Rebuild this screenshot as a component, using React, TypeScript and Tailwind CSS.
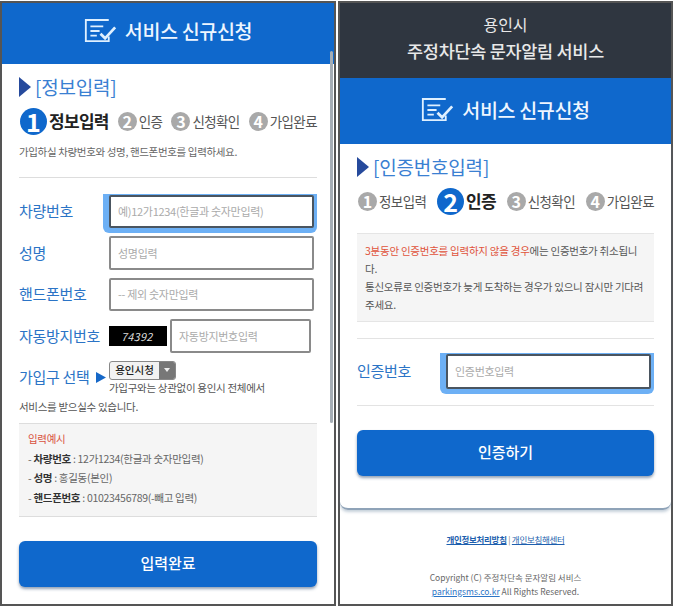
import React from "react";

function TitleIcon() {
  return (
    <svg width="33" height="26" viewBox="0 0 36 26" fill="none" stroke="#dff0ff" strokeWidth="2" className="shrink-0">
      <path d="M27 1H2v23h25v-5" />
      <path d="M7 8h14M7 13h10M7 18h7" />
      <path d="M18 16l5 5L34 9" strokeWidth="3" />
    </svg>
  );
}

function Triangle() {
  return (
    <svg width="12" height="20" viewBox="0 0 12 20" className="shrink-0">
      <path d="M0 0l12 10L0 20z" fill="#264a9c" />
    </svg>
  );
}

function Step({ n, label, active }: { n: number; label: string; active?: boolean }) {
  if (active) {
    return (
      <div className="flex items-center gap-[2px]">
        <span className="flex h-[27px] w-[27px] items-center justify-center rounded-full bg-[#0f68cc] text-[25px] font-bold leading-none text-white">{n}</span>
        <span className="text-[17px] font-bold tracking-[-0.7px] text-[#222]">{label}</span>
      </div>
    );
  }
  return (
    <div className="flex items-center gap-[2px]">
      <span className="flex h-[19px] w-[19px] items-center justify-center rounded-full bg-[#a9a9a9] text-[16px] font-bold leading-none text-white">{n}</span>
      <span className="text-[13.5px] tracking-[-0.6px] text-[#555]">{label}</span>
    </div>
  );
}

function Steps({ current }: { current: number }) {
  const labels = ["정보입력", "인증", "신청확인", "가입완료"];
  return (
    <div className="flex h-[28px] items-center justify-between pl-[1px]">
      {labels.map((label, i) => (
        <Step key={label} n={i + 1} label={label} active={current === i + 1} />
      ))}
    </div>
  );
}

function Field({ placeholder, focus, className }: { placeholder: string; focus?: boolean; className: string }) {
  return (
    <div className={`relative ${className}`}>
      {focus && <div className="absolute -bottom-[5px] -left-[6px] -top-[1px] right-[-3px] rounded-b-[6px] bg-[#6db0f5]" />}
      <div className={`relative flex h-full items-center rounded-[2px] border-2 bg-white pl-[7px] text-[11px] tracking-[-0.3px] text-[#aaa] ${focus ? "border-[#4a5560]" : "border-[#8a8a8a]"}`}>
        {placeholder}
      </div>
    </div>
  );
}

function Label({ children }: { children: React.ReactNode }) {
  return <span className="w-[90px] shrink-0 text-[15px] tracking-[-0.3px] text-[#2b74c6]">{children}</span>;
}

function BlueHeader({ className }: { className: string }) {
  return (
    <div className={`flex shrink-0 items-center justify-center gap-[8px] bg-[#0f68cc] ${className}`}>
      <TitleIcon />
      <span className="text-[19.6px] font-medium tracking-[-0.4px] text-[#eef6ff]">서비스 신규신청</span>
    </div>
  );
}

function SubmitButton({ children }: { children: React.ReactNode }) {
  return (
    <div className="flex h-[46px] items-center justify-center rounded-[6px] bg-[#0f68cc] pb-[2px] text-[15px] font-medium text-white shadow-[0_2px_3px_rgba(40,70,110,0.5)]">
      {children}
    </div>
  );
}

function SectionTitle({ children }: { children: React.ReactNode }) {
  return (
    <div className="flex h-[24px] items-center gap-[4px]">
      <Triangle />
      <span className="text-[19px] tracking-[-0.2px] text-[#3a80d2]">{children}</span>
    </div>
  );
}

function LeftPanel() {
  return (
    <div className="relative flex h-[605px] w-[336px] shrink-0 flex-col border-2 border-[#555] bg-white">
      <BlueHeader className="h-[61px] pb-[5px]" />
      <div className="absolute right-[1px] top-[48px] h-[372px] w-[3px] rounded-full bg-[#a5adb5]" />
      <div className="flex flex-1 flex-col px-[17px] pt-[11px]">
        <SectionTitle>[정보입력]</SectionTitle>
        <div className="mt-[8px]">
          <Steps current={1} />
        </div>
        <p className="mt-[9px] text-[10.5px] tracking-[-0.35px] text-[#666]">가입하실 차량번호와 성명, 핸드폰번호를 입력하세요.</p>
        <div className="mt-[17px] h-[1px] bg-[#ddd]" />

        <div className="mt-[17px] flex items-center">
          <Label>차량번호</Label>
          <Field focus placeholder="예)12가1234(한글과 숫자만입력)" className="h-[33.5px] w-[205px]" />
        </div>
        <div className="mt-[8px] flex items-center">
          <Label>성명</Label>
          <Field placeholder="성명입력" className="h-[33.5px] w-[205px]" />
        </div>
        <div className="mt-[8px] flex items-center">
          <Label>핸드폰번호</Label>
          <Field placeholder="-- 제외 숫자만입력" className="h-[33.5px] w-[205px]" />
        </div>
        <div className="mt-[8px] flex items-center">
          <Label>자동방지번호</Label>
          <div className="flex h-[20px] w-[58px] items-center bg-black pl-[12px] text-[11px] italic tracking-[0.2px] text-[#ddd]">74392</div>
          <Field placeholder="자동방지번호입력" className="ml-[3px] h-[33.5px] w-[141px]" />
        </div>

        <div className="mt-[8px] flex">
          <span className="flex h-[27px] w-[90px] shrink-0 items-end gap-[6px] text-[15px] leading-[22px] tracking-[-0.3px] text-[#2b74c6]">
            <span className="shrink-0">가입구 선택</span>
            <svg width="10" height="11" viewBox="0 0 10 11" className="mb-[5px] shrink-0">
              <path d="M0 0l10 5.5L0 11z" fill="#1668c8" />
            </svg>
          </span>
          <div className="flex flex-col">
            <div className="flex h-[19px] w-[67px] overflow-hidden rounded-[3px] border border-[#888] bg-[#f2f2f2] text-[10.5px] font-medium leading-[16px] text-[#222]">
              <span className="flex-1 text-center">용인시청</span>
              <span className="flex w-[16px] items-center justify-center bg-[#777]">
                <svg width="6" height="4" viewBox="0 0 6 4">
                  <path d="M0 0h6L3 4z" fill="#eee" />
                </svg>
              </span>
            </div>
            <p className="whitespace-nowrap text-[10.5px] tracking-[-0.3px] text-[#555]">가입구와는 상관없이 용인시 전체에서</p>
          </div>
        </div>
        <p className="mt-[3px] text-[10.5px] tracking-[-0.3px] text-[#555]">서비스를 받으실수 있습니다.</p>

        <div className="mt-[9px] h-[94px] border-y border-[#ddd] bg-[#f5f5f5] px-[9px] pt-[5px] text-[10.5px] leading-[19.5px] tracking-[-0.3px] text-[#666]">
          <p className="text-[#d9533f]">입력예시</p>
          <p>- <b className="font-bold text-[#333]">차량번호</b> : 12가1234(한글과 숫자만입력)</p>
          <p>- <b className="font-bold text-[#333]">성명</b> : 홍길동(본인)</p>
          <p>- <b className="font-bold text-[#333]">핸드폰번호</b> : 01023456789(-빼고 입력)</p>
        </div>

        <div className="mt-[24px]">
          <SubmitButton>입력완료</SubmitButton>
        </div>
      </div>
    </div>
  );
}

function RightPanel() {
  return (
    <div className="flex h-[605px] w-[335px] shrink-0 flex-col border-2 border-[#555] bg-white">
      <div className="flex h-[75px] shrink-0 flex-col items-center justify-center bg-[#2f3640] pb-[5px] text-[#e8e8e8]">
        <span className="text-[16px] leading-[25px]">용인시</span>
        <span className="text-[17.5px] font-medium leading-[27px] tracking-[-0.3px]">주정차단속 문자알림 서비스</span>
      </div>
      <BlueHeader className="h-[66px] pb-[2px]" />
      <div className="flex h-[366px] shrink-0 flex-col rounded-b-[8px] border-b-2 border-[#8fa3b8] px-[17px] pt-[11px] shadow-[0_2px_3px_rgba(90,120,150,0.35)]">
        <SectionTitle>[인증번호입력]</SectionTitle>
        <div className="mt-[8px]">
          <Steps current={2} />
        </div>
        <div className="mt-[18px] h-[89px] border-y border-[#e5e5e5] bg-[#f5f5f5] px-[8px] pt-[8px] text-[10.5px] leading-[18px] tracking-[-0.25px] text-[#555]">
          <p className="whitespace-nowrap">
            <span className="text-[#e0533b]">3분동안 인증번호를 입력하지 않을 경우</span>에는 인증번호가 취소됩니
          </p>
          <p>다.</p>
          <p className="whitespace-nowrap">통신오류로 인증번호가 늦게 도착하는 경우가 있으니 잠시만 기다려</p>
          <p>주세요.</p>
        </div>
        <div className="mt-[16px] h-[1px] bg-[#e3e3e3]" />
        <div className="mt-[15px] flex items-center">
          <span className="w-[89px] shrink-0 text-[15px] tracking-[-0.3px] text-[#2b74c6]">인증번호</span>
          <Field focus placeholder="인증번호입력" className="h-[35px] w-[205px]" />
        </div>
        <div className="mt-[16px] h-[1px] bg-[#e3e3e3]" />
        <div className="mt-[24px]">
          <SubmitButton>인증하기</SubmitButton>
        </div>
      </div>
      <div className="mt-[23px] text-center text-[8.5px] tracking-[-0.3px] text-[#1d5fae]">
        <a className="font-bold underline">개인정보처리방침</a>
        <span className="text-[#777]"> | </span>
        <a className="underline">개인보침해센터</a>
      </div>
      <div className="mt-[24px] text-center text-[8.5px] leading-[14px] text-[#666]">
        <p>Copyright (C) 주정차단속 문자알림 서비스</p>
        <p>
          <a className="text-[#2b74c6] underline">parkingsms.co.kr</a> All Rights Reserved.
        </p>
      </div>
    </div>
  );
}

export default function App() {
  return (
    <div className="flex h-[606px] w-[674px] gap-[2px] overflow-hidden bg-white pt-[1px] font-['Noto_Sans_CJK_KR','Liberation_Sans',sans-serif]">
      <LeftPanel />
      <RightPanel />
    </div>
  );
}
